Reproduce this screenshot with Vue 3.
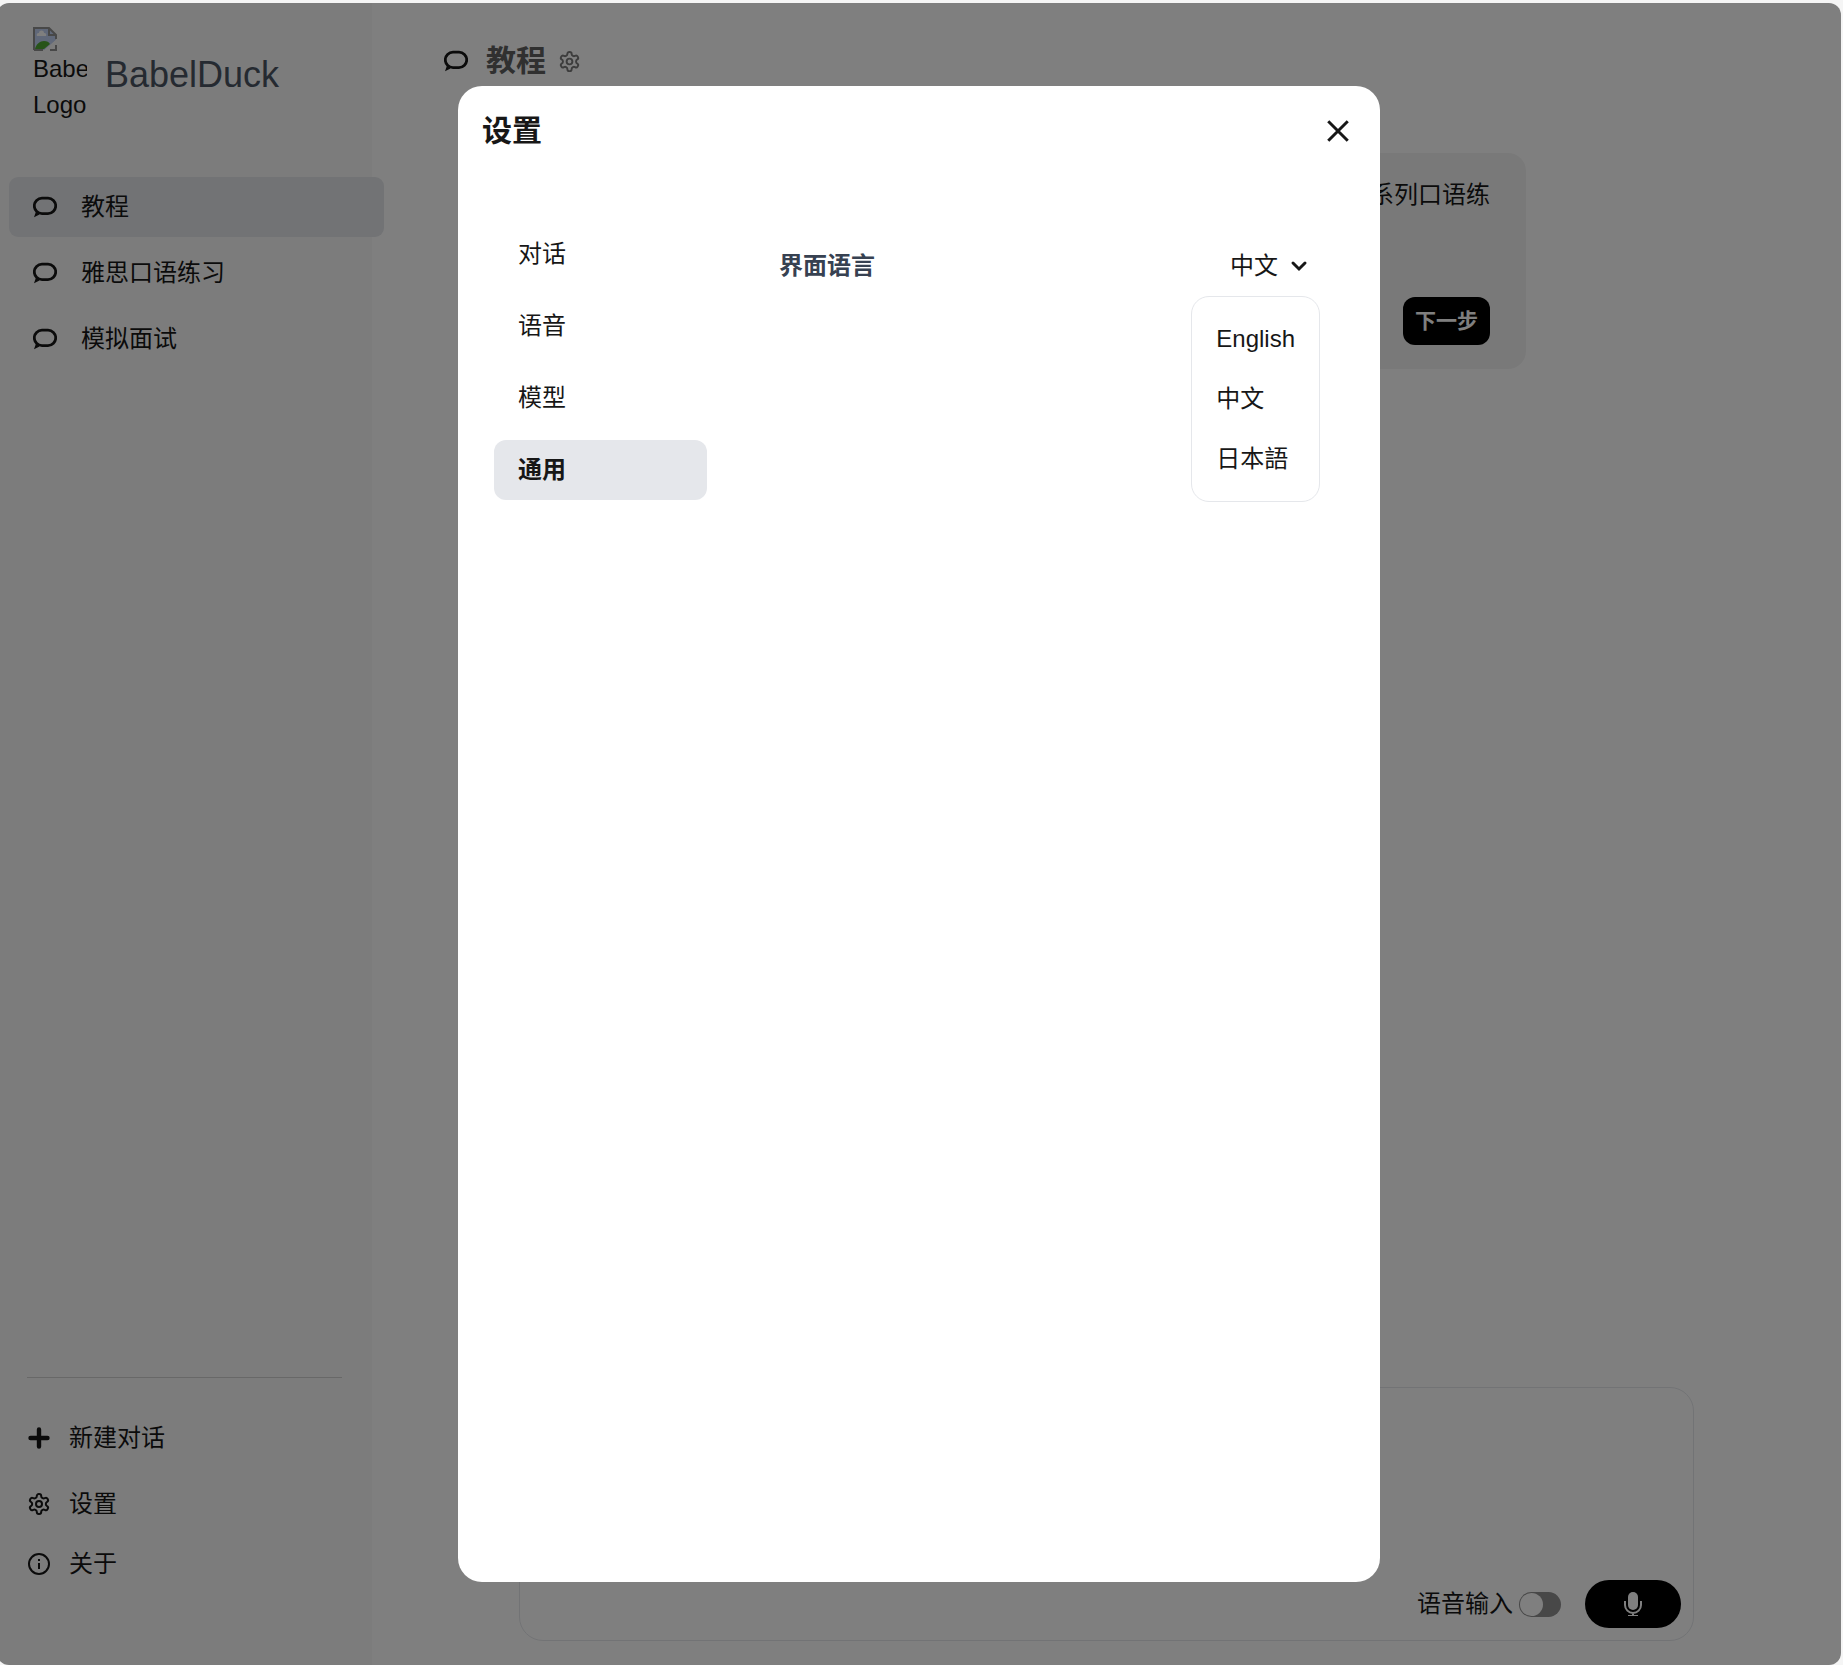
<template>
  <div class="app">
    <aside class="sidebar">
      <div class="brand">
        <div class="logo">
          <svg class="logo-icon" viewBox="0 0 24 24" aria-hidden="true">
            <path d="M1 1h15l7 7v5L12 23H1z" fill="#c1d1f2" />
            <path d="M4 9a2 2 0 0 1 2-3 2.500 2.500 0 0 1 5 0 2 2 0 0 1 2 3z" fill="#fff" />
            <path d="M2 22c1-5 5-8 9-8 3 0 5 1 6 3l-6 5z" fill="#4fa832" />
            <path d="M10 24L24 12v5l-8 7z" fill="#f9f9f9" />
            <path d="M16 1v7h7M1 23V1h15l7 7v4M1 23h9M17 23h6v-5" fill="none" stroke="#909090" stroke-width="2" />
          </svg>
          <span>Babel</span>
          <span>Logo</span>
        </div>
        <span class="brand-name">BabelDuck</span>
      </div>

      <nav class="chat-list">
        <button
          v-for="chat in chats"
          :key="chat"
          class="chat-item"
          :class="{ active: chat === currentChat }"
          @click="currentChat = chat"
        >
          <svg class="icon" viewBox="0 0 24 24">
            <path :d="bubblePath" fill="none" stroke="currentColor" stroke-width="2.800" />
            <path :d="bubbleTail" fill="currentColor" />
          </svg>
          {{ chat }}
        </button>
      </nav>

      <div class="sidebar-footer">
        <button class="footer-item new-chat">
          <svg class="icon" viewBox="0 0 24 24">
            <path d="M12 3.500v17M3.500 12h17" fill="none" stroke="currentColor" stroke-width="4.400" stroke-linecap="round" />
          </svg>
          新建对话
        </button>
        <button class="footer-item" @click="showSettings = true">
          <svg class="icon" viewBox="0 0 24 24" fill="none" stroke="currentColor" stroke-width="2">
            <path :d="gearPath" />
            <circle cx="12" cy="12" r="3" />
          </svg>
          设置
        </button>
        <button class="footer-item">
          <svg class="icon" viewBox="0 0 24 24" fill="none" stroke="currentColor">
            <circle cx="12" cy="12" r="10" stroke-width="2" />
            <path d="M12 11v6M12 7v2" stroke-width="2" />
          </svg>
          关于
        </button>
      </div>
    </aside>

    <main class="main">
      <header class="chat-header">
        <svg class="icon" viewBox="0 0 24 24">
          <path :d="bubblePath" fill="none" stroke="currentColor" stroke-width="2.800" />
          <path :d="bubbleTail" fill="currentColor" />
        </svg>
        <h1 class="chat-title">{{ currentChat }}</h1>
        <button class="icon-btn" aria-label="对话设置">
          <svg class="small-icon" viewBox="0 0 24 24" fill="none" stroke="currentColor" stroke-width="2">
            <path :d="gearPath" />
            <circle cx="12" cy="12" r="3" />
          </svg>
        </button>
      </header>

      <section class="messages">
        <div class="message-card">
          <p class="message-text">
            你好，我是你的口语练习伙伴，接下来我会带你了解如何使用这个应用做一系列口语练习。
          </p>
          <button class="next-btn">下一步</button>
        </div>
      </section>

      <form class="composer" @submit.prevent>
        <textarea v-model="message" class="composer-input" aria-label="消息"></textarea>
        <div class="composer-bar">
          <label class="voice-label">
            语音输入
            <input v-model="voiceInput" type="checkbox" class="switch" />
          </label>
          <button type="button" class="mic-btn" aria-label="录音">
            <svg class="icon" viewBox="0 0 24 24">
              <rect x="7" y="0" width="10" height="18" rx="5" fill="currentColor" />
              <path d="M4 9v4a8 8 0 0 0 16 0V9M12 21v3M7 24h10" fill="none" stroke="currentColor" stroke-width="2" />
            </svg>
          </button>
        </div>
      </form>
    </main>

    <div v-if="showSettings" class="overlay">
      <div class="modal" role="dialog" aria-modal="true" aria-labelledby="settings-title">
        <div class="modal-header">
          <h2 id="settings-title" class="modal-title">设置</h2>
          <button class="icon-btn" aria-label="关闭" @click="showSettings = false">
            <svg class="close-icon" viewBox="0 0 24 24">
              <path d="M5.500 5.500l13 13M18.500 5.500l-13 13" fill="none" stroke="currentColor" stroke-width="2" />
            </svg>
          </button>
        </div>

        <div class="modal-body">
          <nav class="tabs">
            <button
              v-for="tab in tabs"
              :key="tab"
              class="tab"
              :class="{ active: tab === currentTab }"
              @click="currentTab = tab"
            >
              {{ tab }}
            </button>
          </nav>

          <section class="panel">
            <div class="setting-row">
              <span id="lang-label" class="setting-label">界面语言</span>
              <div class="lang-select">
                <button
                  class="lang-btn"
                  aria-haspopup="listbox"
                  aria-labelledby="lang-label"
                  :aria-expanded="langOpen"
                  @click="langOpen = !langOpen"
                >
                  {{ language }}
                  <svg class="icon" viewBox="0 0 24 24">
                    <path d="M6 9l6 6 6-6" fill="none" stroke="currentColor" stroke-width="3" stroke-linecap="round" />
                  </svg>
                </button>
                <ul v-if="langOpen" class="lang-menu" role="listbox" aria-labelledby="lang-label">
                  <li v-for="lang in languages" :key="lang">
                    <button
                      class="lang-option"
                      role="option"
                      :aria-selected="lang === language"
                      @click="selectLanguage(lang)"
                    >
                      {{ lang }}
                    </button>
                  </li>
                </ul>
              </div>
            </div>
          </section>
        </div>
      </div>
    </div>
  </div>
</template>

<script setup>
import { ref } from 'vue'

const chats = ['教程', '雅思口语练习', '模拟面试']
const tabs = ['对话', '语音', '模型', '通用']
const languages = ['English', '中文', '日本語']

const currentChat = ref('教程')
const currentTab = ref('通用')
const language = ref('中文')
const showSettings = ref(true)
const langOpen = ref(true)
const voiceInput = ref(false)
const message = ref('')

const selectLanguage = (lang) => {
  language.value = lang
  langOpen.value = false
}

// 图标路径
const bubblePath = 'M9 3.200h6a7.600 7.600 0 0 1 0 15.400H9a7.600 7.600 0 0 1 0-15.400z'
const bubbleTail = 'M3 16.500L1 22.200l5.500-2.800z'
const gearPath =
  'M12.22 2h-.44a2 2 0 0 0-2 2v.18a2 2 0 0 1-1 1.73l-.43.25a2 2 0 0 1-2 0l-.15-.08a2 2 0 0 0-2.73.73l-.22.38a2 2 0 0 0 .73 2.73l.15.1a2 2 0 0 1 1 1.72v.51a2 2 0 0 1-1 1.74l-.15.09a2 2 0 0 0-.73 2.73l.22.38a2 2 0 0 0 2.73.73l.15-.08a2 2 0 0 1 2 0l.43.25a2 2 0 0 1 1 1.73V20a2 2 0 0 0 2 2h.44a2 2 0 0 0 2-2v-.18a2 2 0 0 1 1-1.73l.43-.25a2 2 0 0 1 2 0l.15.08a2 2 0 0 0 2.73-.73l.22-.39a2 2 0 0 0-.73-2.73l-.15-.08a2 2 0 0 1-1-1.74v-.5a2 2 0 0 1 1-1.74l.15-.09a2 2 0 0 0 .73-2.73l-.22-.38a2 2 0 0 0-2.73-.73l-.15.08a2 2 0 0 1-2 0l-.43-.25a2 2 0 0 1-1-1.73V4a2 2 0 0 0-2-2z'
</script>

<style>
body {
  background: #f5f5f5;
  overflow: hidden;
}
</style>

<style scoped>
.app {
  position: relative;
  display: flex;
  box-sizing: border-box;
  height: calc(100vh - 3px);
  margin: 3px 2px 0 -3px;
  border-radius: 12px;
  overflow: hidden;
  background: #fff;
  color: #171717;
  font-family: "Liberation Sans", "Noto Sans CJK SC", sans-serif;
  font-size: 24px;
  line-height: 36px;
}

button {
  border: none;
  padding: 0;
  background: none;
  color: inherit;
  font: inherit;
  text-align: left;
  cursor: pointer;
}

.icon {
  width: 24px;
  height: 24px;
  flex-shrink: 0;
}

/* 侧边栏 */
.sidebar {
  display: flex;
  flex-direction: column;
  box-sizing: border-box;
  width: 375px;
  flex-shrink: 0;
  padding: 24px 0 71px 12px;
  background: #f9f9f9;
}

.brand {
  display: flex;
  align-items: center;
  gap: 18px;
  padding-left: 24px;
  margin-bottom: 54px;
}

.logo {
  display: flex;
  flex-direction: column;
  width: 54px;
  overflow: hidden;
}

.logo-icon {
  width: 24px;
  height: 24px;
}

.brand-name {
  font-size: 36px;
  color: #4b5563;
}

.chat-list {
  display: flex;
  flex-direction: column;
  gap: 6px;
  margin-right: -12px;
}

.chat-item {
  display: flex;
  align-items: center;
  gap: 24px;
  padding: 12px 24px;
  border-radius: 9px;
}

.chat-item.active {
  background: #e5e7eb;
}

.sidebar-footer {
  display: flex;
  flex-direction: column;
  margin: auto 30px 0 18px;
  padding-top: 30px;
  border-top: 1px solid #d1d1d1;
}

.footer-item {
  display: flex;
  align-items: center;
  gap: 18px;
  padding: 12px 0;
}

.new-chat {
  margin-bottom: 6px;
}

/* 对话区 */
.main {
  display: flex;
  flex-direction: column;
  align-items: center;
  flex: 1;
  min-width: 0;
  padding-bottom: 24px;
}

.chat-header {
  display: flex;
  align-items: center;
  align-self: stretch;
  padding: 36px 72px 0;
}

.chat-title {
  margin: 0 12px 0 18px;
  font-size: 30px;
  line-height: 44px;
  color: #606060;
}

.icon-btn {
  display: flex;
}

.small-icon {
  width: 23px;
  height: 23px;
  color: #7b7b7b;
}

.messages {
  display: flex;
  justify-content: flex-end;
  align-items: flex-start;
  flex: 1;
  width: 80%;
  padding-top: 70px;
}

.message-card {
  display: flex;
  flex-direction: column;
  align-items: flex-end;
  gap: 48px;
  box-sizing: border-box;
  max-width: 984px;
  margin-right: 168px;
  padding: 24px 36px;
  border-radius: 18px;
  background: #f3f3f3;
}

.message-text {
  margin: 0;
}

.next-btn {
  padding: 6px 12px;
  border-radius: 12px;
  background: #000;
  color: #fff;
  font-size: 21px;
  font-weight: 700;
}

.composer {
  display: flex;
  flex-direction: column;
  box-sizing: border-box;
  width: 80%;
  height: 254px;
  padding: 12px;
  border: 1px solid #e5e7eb;
  border-radius: 24px;
}

.composer-input {
  flex: 1;
  border: none;
  outline: none;
  resize: none;
  background: transparent;
  font: inherit;
}

.composer-bar {
  display: flex;
  justify-content: flex-end;
  align-items: center;
  gap: 24px;
}

.voice-label {
  display: flex;
  align-items: center;
  gap: 6px;
}

.switch {
  display: flex;
  appearance: none;
  box-sizing: border-box;
  width: 42px;
  height: 25px;
  margin: 0;
  padding: 1px;
  border-radius: 13px;
  background: #909090;
  cursor: pointer;
}

.switch::before {
  content: "";
  width: 23px;
  height: 23px;
  border-radius: 50%;
  background: #fff;
}

.switch:checked {
  justify-content: flex-end;
  background: #000;
}

.mic-btn {
  display: flex;
  justify-content: center;
  align-items: center;
  width: 96px;
  height: 48px;
  border-radius: 24px;
  background: #000;
  color: #fff;
}

/* 设置弹窗 */
.overlay {
  position: absolute;
  inset: 0;
  display: flex;
  justify-content: center;
  align-items: center;
  background: rgba(0, 0, 0, 0.5);
}

.modal {
  display: flex;
  flex-direction: column;
  box-sizing: border-box;
  width: 50%;
  height: 90%;
  padding: 24px;
  border-radius: 24px;
  background: #fff;
}

.modal-header {
  display: flex;
  justify-content: space-between;
  align-items: center;
}

.modal-title {
  margin: 0;
  font-size: 30px;
  line-height: 42px;
}

.close-icon {
  width: 36px;
  height: 36px;
}

.modal-body {
  display: flex;
  padding: 72px 36px 0 12px;
}

.tabs {
  display: flex;
  flex-direction: column;
  gap: 12px;
  width: 213px;
}

.tab {
  padding: 12px 24px;
  border-radius: 12px;
}

.tab.active {
  background: #e5e7eb;
  font-weight: 700;
}

.panel {
  flex: 1;
  padding: 12px 0 0 72px;
}

.setting-row {
  display: flex;
  justify-content: space-between;
  align-items: center;
}

.setting-label {
  font-weight: 700;
  color: #374151;
}

.lang-select {
  position: relative;
}

.lang-btn {
  display: flex;
  align-items: center;
  gap: 9px;
  padding: 12px 9px;
}

.lang-menu {
  position: absolute;
  top: 100%;
  right: 0;
  margin: 0;
  padding: 12px 0;
  list-style: none;
  border: 1px solid #e5e7eb;
  border-radius: 18px;
  background: #fff;
}

.lang-option {
  display: block;
  width: 100%;
  padding: 12px 24px;
}
</style>
